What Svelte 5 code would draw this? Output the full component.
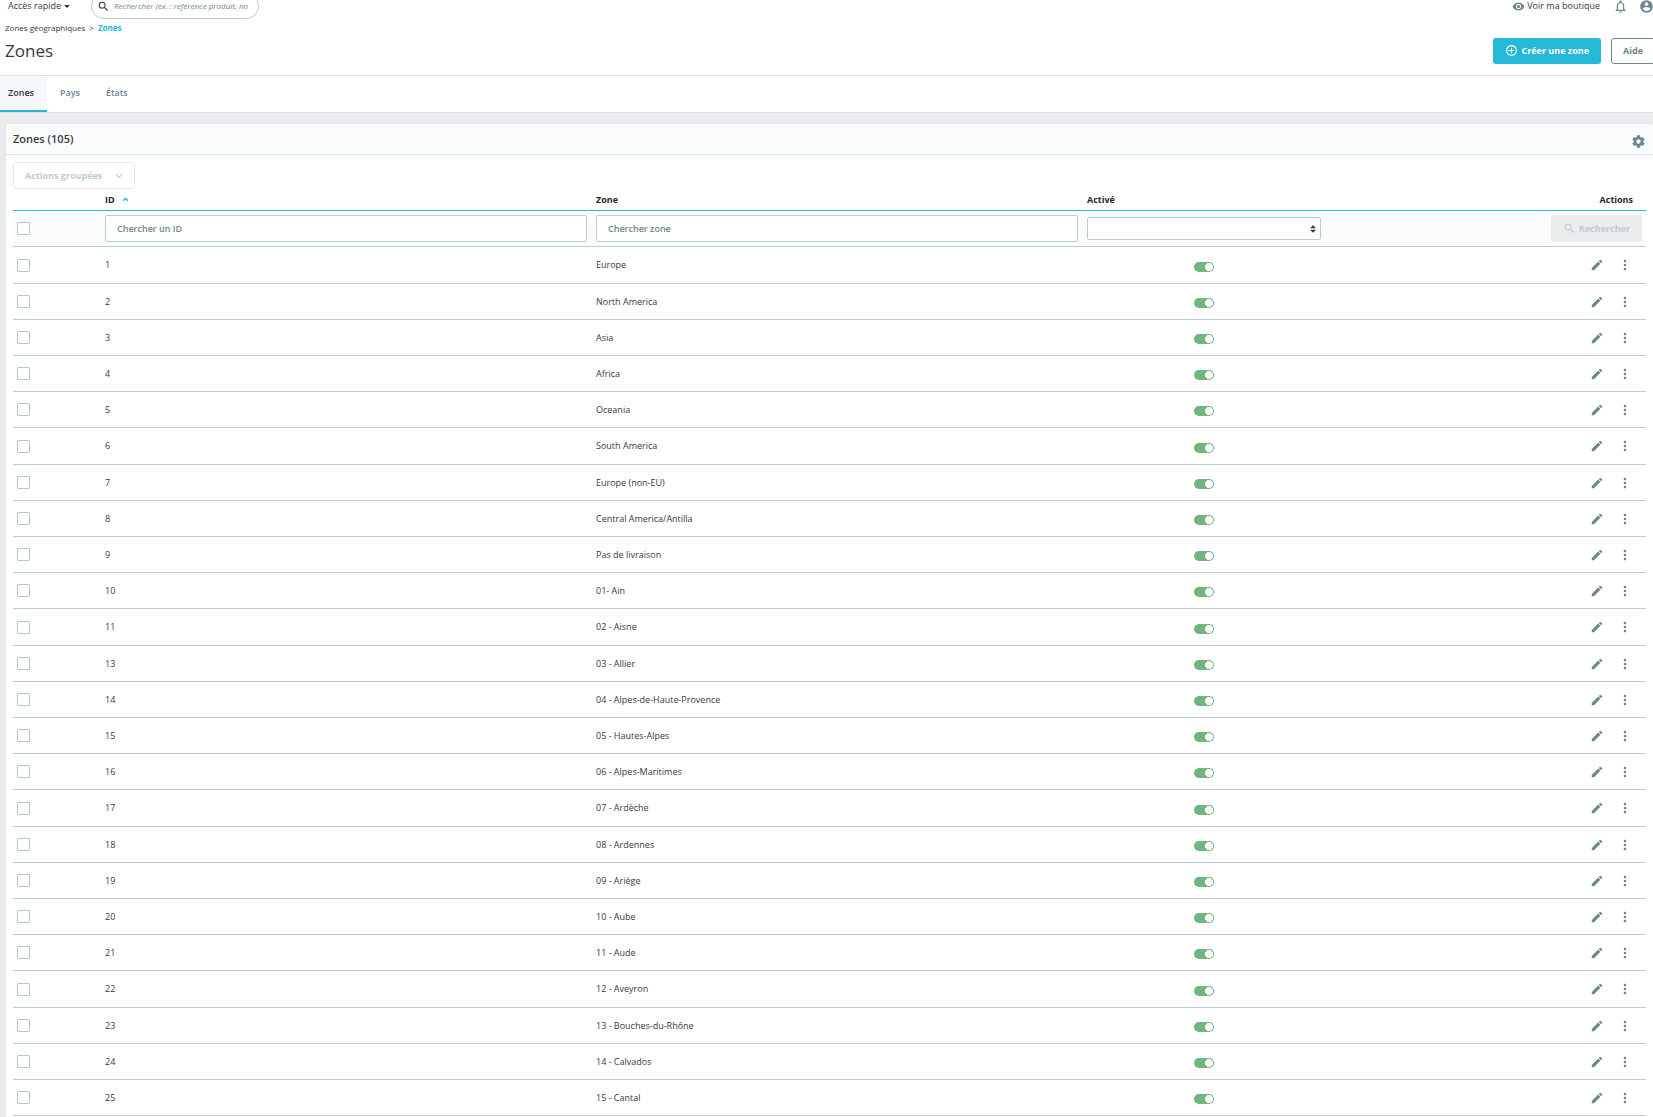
<script lang="ts">
	type Zone = {
		id: number;
		nom: string;
		active: boolean;
	}

	const noms: [number, string][] = [
		[1, "Europe"],
		[2, "North America"],
		[3, "Asia"],
		[4, "Africa"],
		[5, "Oceania"],
		[6, "South America"],
		[7, "Europe (non-EU)"],
		[8, "Central America/Antilla"],
		[9, "Pas de livraison"],
		[10, "01- Ain"],
		[11, "02 - Aisne"],
		[13, "03 - Allier"],
		[14, "04 - Alpes-de-Haute-Provence"],
		[15, "05 - Hautes-Alpes"],
		[16, "06 - Alpes-Maritimes"],
		[17, "07 - Ardèche"],
		[18, "08 - Ardennes"],
		[19, "09 - Ariège"],
		[20, "10 - Aube"],
		[21, "11 - Aude"],
		[22, "12 - Aveyron"],
		[23, "13 - Bouches-du-Rhône"],
		[24, "14 - Calvados"],
		[25, "15 - Cantal"],
	];

	let zones: Zone[] = $state(noms.map(([id, nom]) => ({ id, nom, active: true })));
	let selection: number[] = $state([]);
	let filtreId = $state("");
	let filtreNom = $state("");
	let filtreActive = $state("");

	const total = 105;
	let filtreVide = $derived(!filtreId && !filtreNom && !filtreActive);

	function toutSelectionner(e: Event) {
		const coche = (e.target as HTMLInputElement).checked;
		selection = coche ? zones.map((z) => z.id) : [];
	}
</script>

{#snippet loupe()}
	<svg class="icone" viewBox="0 0 24 24" aria-hidden="true">
		<path d="M15.5 14h-.79l-.28-.27A6.47 6.47 0 0 0 16 9.5 6.5 6.5 0 1 0 9.5 16c1.61 0 3.09-.59 4.23-1.57l.27.28v.79l5 4.99L20.49 19l-4.99-5zm-6 0C7.01 14 5 11.99 5 9.5S7.01 5 9.5 5 14 7.01 14 9.5 11.99 14 9.5 14z" />
	</svg>
{/snippet}

<div class="page">
	<!-- Barre du haut -->
	<header class="entete">
		<div class="barre">
			<button class="acces">Accès rapide <span class="fleche"></span></button>
			<label class="recherche">
				{@render loupe()}
				<input type="text" aria-label="Rechercher" placeholder="Rechercher (ex. : référence produit, no" />
			</label>
			<a class="boutique" href="#boutique">
				<svg class="icone" viewBox="0 0 24 24" aria-hidden="true">
					<path d="M12 4.5C7 4.5 2.73 7.61 1 12c1.73 4.39 6 7.5 11 7.5s9.27-3.11 11-7.5c-1.73-4.39-6-7.5-11-7.5zM12 17c-2.76 0-5-2.24-5-5s2.24-5 5-5 5 2.24 5 5-2.24 5-5 5zm0-8c-1.66 0-3 1.34-3 3s1.34 3 3 3 3-1.34 3-3-1.34-3-3-3z" />
				</svg>
				Voir ma boutique
			</a>
			<button class="rond cloche" aria-label="Notifications">
				<svg viewBox="0 0 24 24" aria-hidden="true">
					<path d="M12 22c1.1 0 2-.9 2-2h-4c0 1.1.9 2 2 2zm6-6v-5c0-3.07-1.63-5.64-4.5-6.32V4c0-.83-.67-1.5-1.5-1.5s-1.5.67-1.5 1.5v.68C7.64 5.36 6 7.92 6 11v5l-2 2v1h16v-1l-2-2zm-2 1H8v-6c0-2.48 1.51-4.5 4-4.5s4 2.02 4 4.5v6z" />
				</svg>
			</button>
			<button class="rond" aria-label="Compte">
				<svg viewBox="0 0 24 24" aria-hidden="true">
					<path d="M12 2C6.48 2 2 6.48 2 12s4.48 10 10 10 10-4.48 10-10S17.52 2 12 2zm0 3c1.66 0 3 1.34 3 3s-1.34 3-3 3-3-1.34-3-3 1.34-3 3-3zm0 14.2c-2.5 0-4.71-1.28-6-3.22.03-1.99 4-3.08 6-3.08 1.99 0 5.97 1.09 6 3.08-1.29 1.94-3.5 3.22-6 3.22z" />
				</svg>
			</button>
		</div>
	</header>

	<!-- Fil d'Ariane, titre et boutons -->
	<div class="titre-page">
		<nav class="ariane" aria-label="Fil d'Ariane">
			<a href="#zones-geo">Zones géographiques</a>
			<span>&gt;</span>
			<a class="courant" href="#zones">Zones</a>
		</nav>
		<div class="titre-ligne">
			<h1>Zones</h1>
			<button class="btn btn-primary">
				<svg viewBox="0 0 24 24" aria-hidden="true">
					<path d="M13 7h-2v4H7v2h4v4h2v-4h4v-2h-4V7zm-1-5C6.48 2 2 6.48 2 12s4.48 10 10 10 10-4.48 10-10S17.52 2 12 2zm0 18c-4.41 0-8-3.59-8-8s3.59-8 8-8 8 3.59 8 8-3.59 8-8 8z" />
				</svg>
				Créer une zone
			</button>
			<button class="btn btn-aide">Aide</button>
		</div>
	</div>

	<nav class="onglets" aria-label="Zones géographiques">
		<a class="actif" href="#zones">Zones</a>
		<a href="#pays">Pays</a>
		<a href="#etats">États</a>
	</nav>

	<!-- Liste des zones -->
	<main class="carte">
		<div class="carte-entete">
			<h2>Zones ({total})</h2>
			<button class="reglages" aria-label="Réglages">
				<svg viewBox="0 0 24 24" aria-hidden="true">
					<path d="M19.43 12.98c.04-.32.07-.64.07-.98s-.03-.66-.07-.98l2.11-1.65c.19-.15.24-.42.12-.64l-2-3.46c-.12-.22-.39-.3-.61-.22l-2.49 1c-.52-.4-1.08-.73-1.69-.98l-.38-2.65A.49.49 0 0 0 14 2h-4c-.25 0-.46.18-.49.42l-.38 2.65c-.61.25-1.17.59-1.69.98l-2.49-1c-.23-.09-.49 0-.61.22l-2 3.46c-.13.22-.07.49.12.64l2.11 1.65c-.04.32-.07.65-.07.98s.03.66.07.98l-2.11 1.65c-.19.15-.24.42-.12.64l2 3.46c.12.22.39.3.61.22l2.49-1c.52.4 1.08.73 1.69.98l.38 2.65c.03.24.24.42.49.42h4c.25 0 .46-.18.49-.42l.38-2.65c.61-.25 1.17-.59 1.69-.98l2.49 1c.23.09.49 0 .61-.22l2-3.46c.12-.22.07-.49-.12-.64l-2.11-1.65zM12 15.5c-1.93 0-3.5-1.57-3.5-3.5s1.57-3.5 3.5-3.5 3.5 1.57 3.5 3.5-1.57 3.5-3.5 3.5z" />
				</svg>
			</button>
		</div>

		<div class="carte-corps">
			<button class="groupees" disabled={selection.length === 0}>
				Actions groupées
				<svg viewBox="0 0 24 24" aria-hidden="true">
					<path d="M7.41 8.59 12 13.17l4.59-4.58L18 10l-6 6-6-6z" />
				</svg>
			</button>

			<table>
				<colgroup>
					<col class="col-coche" />
					<col />
					<col />
					<col class="col-active" />
					<col class="col-actions" />
				</colgroup>
				<thead>
					<tr class="noms">
						<td></td>
						<th scope="col" aria-sort="ascending">
							<button class="tri">
								ID
								<svg viewBox="0 0 24 24" aria-hidden="true"><path d="M4 16l8-8 8 8" /></svg>
							</button>
						</th>
						<th scope="col">Zone</th>
						<th scope="col">Activé</th>
						<th scope="col" class="droite">Actions</th>
					</tr>
					<tr class="filtres">
						<td><input class="coche" type="checkbox" aria-label="Tout sélectionner" onchange={toutSelectionner} /></td>
						<td><input class="champ" type="text" aria-label="ID" placeholder="Chercher un ID" bind:value={filtreId} /></td>
						<td><input class="champ" type="text" aria-label="Zone" placeholder="Chercher zone" bind:value={filtreNom} /></td>
						<td>
							<select class="liste" aria-label="Activé" bind:value={filtreActive}>
								<option value=""></option>
								<option value="1">Oui</option>
								<option value="0">Non</option>
							</select>
						</td>
						<td>
							<button class="btn-recherche" disabled={filtreVide}>
								{@render loupe()}
								Rechercher
							</button>
						</td>
					</tr>
				</thead>
				<tbody>
					{#each zones as z (z.id)}
						<tr>
							<td><input class="coche" type="checkbox" aria-label="Sélectionner {z.nom}" value={z.id} bind:group={selection} /></td>
							<td>{z.id}</td>
							<td>{z.nom}</td>
							<td><input class="bascule" type="checkbox" role="switch" aria-label="Activer {z.nom}" bind:checked={z.active} /></td>
							<td>
								<div class="actions">
									<button aria-label="Modifier {z.nom}">
										<svg viewBox="0 0 24 24" aria-hidden="true">
											<path d="M3 17.25V21h3.75L17.81 9.94l-3.75-3.75L3 17.25zM20.71 7.04a1 1 0 0 0 0-1.41l-2.34-2.34a1 1 0 0 0-1.41 0l-1.83 1.83 3.75 3.75 1.83-1.83z" />
										</svg>
									</button>
									<button aria-label="Plus d'actions">
										<svg class="points" viewBox="0 0 24 24" aria-hidden="true">
											<path d="M12 8c1.1 0 2-.9 2-2s-.9-2-2-2-2 .9-2 2 .9 2 2 2zm0 2c-1.1 0-2 .9-2 2s.9 2 2 2 2-.9 2-2-.9-2-2-2zm0 6c-1.1 0-2 .9-2 2s.9 2 2 2 2-.9 2-2-.9-2-2-2z" />
										</svg>
									</button>
								</div>
							</td>
						</tr>
					{/each}
				</tbody>
			</table>
		</div>
	</main>
</div>

<style>
	:global(body) {
		background: #e9ebec;
		overflow: hidden;
	}

	.page {
		font-family: "Open Sans", "Noto Sans", sans-serif;
		font-size: 9px;
		line-height: 16px;
		color: #363a41;
	}

	.page * {
		box-sizing: border-box;
	}

	button, input, select {
		font: inherit;
		color: inherit;
		margin: 0;
	}

	button {
		display: flex;
		align-items: center;
		padding: 0;
		border: none;
		background: none;
		cursor: pointer;
	}

	a {
		color: inherit;
		text-decoration: none;
	}

	svg {
		display: block;
		fill: #6c868e;
		flex: none;
	}

	.icone {
		width: 13px;
		height: 13px;
	}

	/* Barre du haut, remontée en partie hors de la fenêtre */
	.entete {
		background: #fff;
		overflow: hidden;
	}

	.barre {
		display: flex;
		align-items: center;
		height: 28px;
		margin: -8px -1px 0 0;
		padding-left: 8px;
		line-height: 12px;
	}

	.acces {
		gap: 3px;
		margin-right: 21px;
	}

	.fleche {
		border: 3px solid transparent;
		border-top-color: #363a41;
		border-bottom: none;
	}

	.recherche {
		display: flex;
		align-items: center;
		gap: 4px;
		width: 168px;
		height: 26px;
		padding: 0 9px 0 5px;
		border: 1px solid #bbcdd2;
		border-radius: 13px;
	}

	.recherche .icone {
		fill: #363a41;
	}

	.recherche input {
		flex: 1;
		min-width: 0;
		padding: 0;
		border: none;
		outline: none;
		background: none;
		font-size: 8px;
		font-style: italic;
		font-weight: 500;
	}

	.recherche input::placeholder {
		color: #6c868e;
		opacity: 1;
	}

	.boutique {
		display: flex;
		align-items: center;
		gap: 2px;
		margin-left: auto;
		margin-right: 13px;
	}

	.rond svg {
		width: 15px;
		height: 15px;
	}

	.cloche {
		margin-right: 11px;
	}

	/* Titre */
	.titre-page {
		background: #fff;
		border-bottom: 1px solid #dfe1e3;
		padding: 0 0 10px 5px;
	}

	.ariane {
		display: flex;
		gap: 4px;
		font-size: 8px;
		font-weight: 500;
	}

	.ariane .courant {
		color: #25b9d7;
		font-weight: 700;
	}

	.titre-ligne {
		display: flex;
		align-items: center;
		height: 29px;
	}

	h1 {
		margin: 0 auto 0 0;
		font-size: 17px;
		font-weight: 400;
		line-height: 26px;
	}

	.btn {
		height: 26px;
		border-radius: 3px;
		font-weight: 700;
	}

	.btn-primary {
		gap: 3px;
		padding: 0 12px;
		margin-right: 10px;
		background: #25b9d7;
		color: #fff;
	}

	.btn-primary svg {
		width: 13px;
		height: 13px;
		fill: #fff;
	}

	.btn-aide {
		margin-right: -2px;
		padding: 0 11px;
		border: 1px solid #6c868e;
		color: #6c868e;
	}

	/* Onglets */
	.onglets {
		display: flex;
		height: 37px;
		background: #fff;
		border-bottom: 1px solid #dfe1e3;
		font-weight: 600;
	}

	.onglets a {
		padding: 9px 13px 0;
		color: #6c868e;
	}

	.onglets .actif {
		padding-left: 8px;
		background: #f4f8fb;
		border-bottom: 2px solid #25b9d7;
		color: #363a41;
	}

	/* Carte */
	.carte {
		margin: 11px 0 0 6px;
		background: #fff;
		border-radius: 3px;
		box-shadow: 0 0 2px #cfdfe2;
	}

	.carte-entete {
		display: flex;
		align-items: flex-end;
		justify-content: space-between;
		height: 31px;
		padding: 0 7px 5px;
		background: #fafbfc;
		border-bottom: 1px solid #d5e4e6;
		border-radius: 3px 3px 0 0;
	}

	h2 {
		margin: 0;
		font-size: 11px;
		font-weight: 600;
		line-height: 20px;
	}

	.reglages svg {
		width: 15px;
		height: 15px;
	}

	.carte-corps {
		padding: 7px;
	}

	.groupees {
		gap: 10px;
		height: 27px;
		padding: 0 8px 0 11px;
		border: 1px solid #eaebec;
		border-radius: 3px;
		color: #bbcdd2;
		font-weight: 700;
	}

	.groupees svg {
		width: 14px;
		height: 14px;
		fill: #bbcdd2;
	}

	/* Tableau */
	table {
		width: 100%;
		table-layout: fixed;
		border-collapse: collapse;
	}

	.col-coche {
		width: 87px;
	}

	.col-active {
		width: 243px;
	}

	.col-actions {
		width: 321px;
	}

	th, td {
		padding: 1px 4px 0 5px;
		text-align: left;
		vertical-align: middle;
	}

	td:first-child {
		padding-left: 4px;
	}

	.noms {
		height: 21px;
	}

	.noms th, .tri {
		font-weight: 700;
		color: #25282d;
	}

	.noms th.droite {
		padding-right: 13px;
		text-align: right;
	}

	.tri {
		gap: 7px;
	}

	.tri svg {
		width: 7px;
		height: 7px;
		fill: none;
		stroke: #25b9d7;
		stroke-width: 5;
	}

	.filtres {
		height: 36px;
		background: #fafbfc;
		border-top: 1px solid #25b9d7;
		border-bottom: 1px solid #bbcdd2;
	}

	tbody tr {
		height: 36px;
		border-bottom: 1px solid #bbcdd2;
	}

	tbody tr:nth-child(5n + 1) {
		height: 37px;
	}

	.coche {
		display: block;
		width: 13px;
		height: 13px;
		appearance: none;
		background: #fff;
		border: 1px solid #b3c7cd;
		border-radius: 1px;
	}

	.coche:checked {
		background: #25b9d7;
		border-color: #25b9d7;
	}

	.champ {
		display: block;
		width: 100%;
		height: 27px;
		padding: 0 11px;
		background: #fff;
		border: 1px solid #bbcdd2;
		border-radius: 2px;
		font-weight: 600;
	}

	.champ::placeholder {
		color: #6c868e;
		opacity: 1;
	}

	.liste {
		display: block;
		width: 100%;
		height: 23px;
		padding: 0 8px;
		appearance: none;
		border: 1px solid #bbcdd2;
		border-radius: 2px;
		background: #fff url("data:image/svg+xml,%3Csvg xmlns='http://www.w3.org/2000/svg' viewBox='0 0 4 5'%3E%3Cpath fill='%23363a41' d='M2 0L0 2h4zm0 5L0 3h4z'/%3E%3C/svg%3E") no-repeat right 4px center / 6px 8px;
	}

	.btn-recherche {
		justify-content: center;
		gap: 3px;
		height: 27px;
		margin-left: auto;
		padding: 0 12px;
		background: #eaebec;
		border-radius: 2px;
		color: #bbcdd2;
		font-weight: 700;
	}

	.btn-recherche .icone {
		fill: #bbcdd2;
	}

	.bascule {
		display: block;
		width: 20px;
		height: 10px;
		margin: 3px auto 0;
		appearance: none;
		border-radius: 5px;
		background: #b3c7cd radial-gradient(circle at 5px 5px, #fff 4px, transparent 4px);
	}

	.bascule:checked {
		background: #70b580 radial-gradient(circle at 15px 5px, #fff 4px, transparent 4px);
	}

	.actions {
		display: flex;
		align-items: center;
		justify-content: flex-end;
		gap: 13px;
		padding-right: 9px;
	}

	.actions svg {
		width: 14px;
		height: 14px;
	}

	.actions svg.points {
		width: 16px;
		height: 16px;
	}
</style>
